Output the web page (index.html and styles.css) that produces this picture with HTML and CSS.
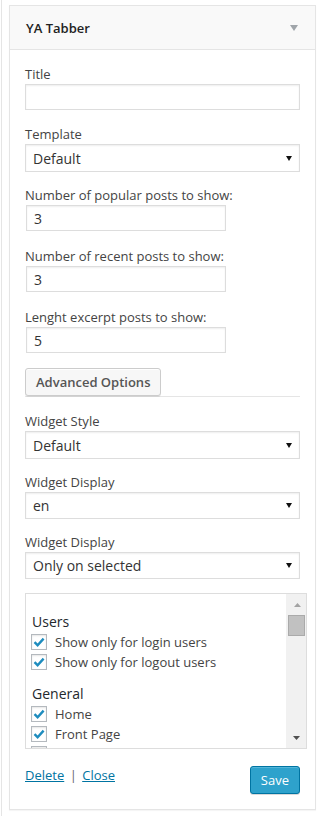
FILE: index.html
```html
<!DOCTYPE html>
<html lang="en">
<head>
<meta charset="utf-8">
<title>YA Tabber</title>
<link rel="stylesheet" href="styles.css">
</head>
<body>
<div class="page">
  <div class="widget">
    <div class="widget-top">
      <h3 class="widget-title">YA Tabber</h3>
      <svg class="toggle" width="8" height="6" viewBox="0 0 8 6"><path d="M0 0H8L4 6Z" fill="#a0a5aa"/></svg>
    </div>
    <div class="widget-inside">
      <div class="field">
        <label>Title</label>
        <input class="wide" type="text" value="">
      </div>
      <div class="field sel">
        <label>Template</label>
        <select class="wide-select"><option>Default</option></select>
      </div>
      <div class="field num">
        <label>Number of popular posts to show:</label>
        <input class="small" type="text" value="3">
      </div>
      <div class="field num">
        <label>Number of recent posts to show:</label>
        <input class="small" type="text" value="3">
      </div>
      <div class="field">
        <label>Lenght excerpt posts to show:</label>
        <input class="small" type="text" value="5">
      </div>
      <div class="adv-tabs">
        <button class="adv-btn" type="button">Advanced Options</button>
      </div>
      <div class="field sel">
        <label>Widget Style</label>
        <select class="wide-select"><option>Default</option></select>
      </div>
      <div class="field sel">
        <label>Widget Display</label>
        <select class="wide-select short"><option>en</option></select>
      </div>
      <div class="field sel">
        <label>Widget Display</label>
        <select class="wide-select short"><option>Only on selected</option></select>
      </div>
      <div class="checklist">
        <div class="list-body">
          <h4 class="group">Users</h4>
          <div class="row"><span class="cb"><svg width="12" height="10" viewBox="0 0 12 10"><path d="M1.5 5.2L4.6 8.2L10.6 1.6" fill="none" stroke="#1e8cbe" stroke-width="2.4"/></svg></span>Show only for login users</div>
          <div class="row"><span class="cb"><svg width="12" height="10" viewBox="0 0 12 10"><path d="M1.5 5.2L4.6 8.2L10.6 1.6" fill="none" stroke="#1e8cbe" stroke-width="2.4"/></svg></span>Show only for logout users</div>
          <h4 class="group gap">General</h4>
          <div class="row"><span class="cb"><svg width="12" height="10" viewBox="0 0 12 10"><path d="M1.5 5.2L4.6 8.2L10.6 1.6" fill="none" stroke="#1e8cbe" stroke-width="2.4"/></svg></span>Home</div>
          <div class="row"><span class="cb"><svg width="12" height="10" viewBox="0 0 12 10"><path d="M1.5 5.2L4.6 8.2L10.6 1.6" fill="none" stroke="#1e8cbe" stroke-width="2.4"/></svg></span>Front Page</div>
          <div class="row"><span class="cb"></span>Single Post</div>
        </div>
        <div class="scrollbar">
          <svg class="arr-up" width="7" height="4" viewBox="0 0 7 4"><path d="M0 4H7L3.5 0Z" fill="#a3a3a3"/></svg>
          <div class="thumb"></div>
          <div class="track"></div>
          <svg class="arr-down" width="7" height="4" viewBox="0 0 7 4"><path d="M0 0H7L3.5 4Z" fill="#505050"/></svg>
        </div>
      </div>
      <div class="footer">
        <div class="links"><a href="#">Delete</a> <span class="sep">|</span> <a href="#">Close</a></div>
        <button class="save" type="button">Save</button>
      </div>
    </div>
  </div>
</div>
</body>
</html>
```

FILE: styles.css
```css
* { box-sizing: border-box; }
html, body { margin: 0; padding: 0; background: #fff; }
body {
  font-family: "Open Sans", "Liberation Sans", sans-serif;
  font-size: 13px;
  color: #444;
}
.page {
  margin-left: 1px;
  border-left: 1px solid #e5e5e5;
  padding: 5px 8px 6px 7px;
  min-height: 816px;
}
.widget {
  width: 307px;
  border: 1px solid #e5e5e5;
  background: #fff;
  box-shadow: 0 1px 1px rgba(0,0,0,.04);
}
.widget-top {
  height: 44px;
  background: #f9f9f9;
  border-bottom: 1px solid #e5e5e5;
  display: flex;
  align-items: center;
  justify-content: space-between;
  padding: 0 17px 0 16px;
}
.widget-title {
  margin: 0;
  font-size: 13px;
  font-weight: 600;
  color: #222;
  line-height: 18px;
}
.toggle { display: block; margin-top: 1px; }
.widget-inside {
  padding: 15px 15px 15px 15px;
}
.field { margin-bottom: 15px; }
.field.sel { margin-bottom: 14px; }
.field.num { margin-bottom: 16px; }
.field label {
  display: block;
  line-height: 18px;
  margin-bottom: 1px;
  color: #444;
}
input, select, button { font-family: "Open Sans", "Liberation Sans", sans-serif; }
input.wide, input.small {
  display: block;
  height: 26px;
  border: 1px solid #ddd;
  box-shadow: inset 0 1px 2px rgba(0,0,0,.07);
  padding: 0 7px;
  font-size: 14px;
  color: #333;
  background: #fff;
  outline: none;
  margin: 0;
}
input.wide { width: 100%; }
input.small { width: 200px; margin-left: 1px; }
.wide-select {
  display: block;
  width: 100%;
  height: 28px;
  margin: 0;
  border: 1px solid #ddd;
  border-radius: 0;
  box-shadow: inset 0 1px 2px rgba(0,0,0,.07);
  padding: 0 7px;
  font-size: 14px;
  color: #333;
  background-color: #fff;
  -webkit-appearance: none;
  appearance: none;
  background-image: url("data:image/svg+xml;utf8,<svg xmlns='http://www.w3.org/2000/svg' width='6' height='5' viewBox='0 0 6 5'><path d='M0 0H6L3 5Z' fill='%23111'/></svg>");
  background-repeat: no-repeat;
  background-position: right 7px center;
  outline: none;
}
.wide-select.short { height: 27px; }
.adv-tabs {
  display: flex;
  border-bottom: 1px solid #e5e5e5;
  margin-bottom: 15px;
}
.adv-btn {
  height: 28px;
  padding: 0 10px;
  font-size: 13px;
  font-weight: 600;
  color: #555;
  background: #f7f7f7;
  border: 1px solid #ccc;
  border-radius: 3px;
  box-shadow: inset 0 1px 0 #fff, 0 1px 0 rgba(0,0,0,.08);
  cursor: pointer;
}
.checklist {
  display: flex;
  width: 282px;
  height: 156px;
  border: 1px solid #ddd;
  background: #fff;
}
.list-body {
  flex: 1;
  overflow: hidden;
  padding: 18px 0 0 5px;
}
.group {
  margin: 0;
  font-size: 14px;
  font-weight: 400;
  line-height: 20px;
  color: #23282d;
  padding-left: 1px;
}
.group.gap { margin-top: 12px; }
.row {
  display: flex;
  align-items: center;
  height: 20px;
  color: #444;
  white-space: nowrap;
}
.cb {
  flex: none;
  width: 16px;
  height: 16px;
  border: 1px solid #b4b9be;
  background: #fff;
  box-shadow: inset 0 1px 2px rgba(0,0,0,.1);
  display: flex;
  align-items: center;
  justify-content: center;
  margin-right: 8px;
}
.scrollbar {
  flex: none;
  width: 20px;
  background: #f1f1f1;
  display: flex;
  flex-direction: column;
  align-items: flex-start;
  padding: 9px 0 8px 0;
}
.arr-up, .arr-down { display: block; margin-left: 8px; }
.arr-down { margin-left: 7px; }
.thumb {
  width: 17px;
  height: 21px;
  margin: 8px 0 0 2px;
  background: #c1c1c1;
  border: 1px solid #aaa;
}
.track { flex: 1; }
.footer {
  display: flex;
  justify-content: space-between;
  align-items: flex-start;
  margin-top: 17px;
}
.links { line-height: 18px; color: #444; }
.links a { color: #0074a2; text-decoration: underline; }
.sep { color: #666; margin: 0 2px; }
.save {
  height: 28px;
  padding: 0 10px;
  font-size: 13px;
  color: #fff;
  background: #2ea2cc;
  border: 1px solid #0074a2;
  border-radius: 3px;
  box-shadow: inset 0 1px 0 rgba(120,200,230,.5), 0 1px 0 rgba(0,0,0,.15);
  cursor: pointer;
}
```
